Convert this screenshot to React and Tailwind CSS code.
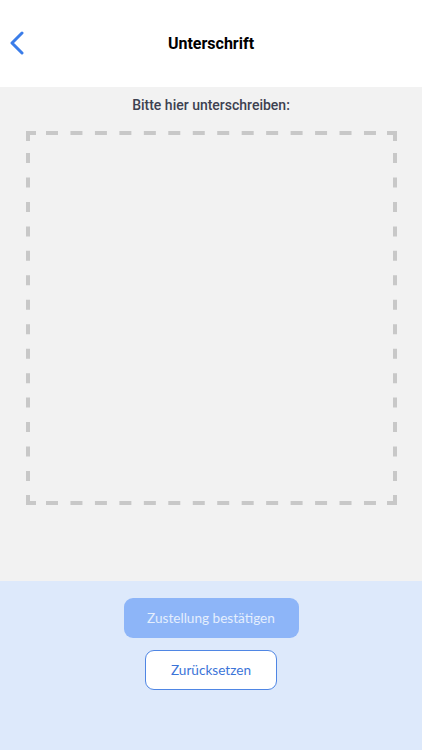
function DashedFrame() {
  // signature frame: solid L-shaped corners with evenly spaced dashes between them
  const c = "#c8c8c8";
  return (
    <svg className="absolute inset-0" width="371" height="374" viewBox="0 0 371 374" fill="none">
      <g stroke={c} strokeWidth="4">
        <path d="M2 10 V2 H10" />
        <path d="M361 2 H369 V10" />
        <path d="M2 364 V372 H10" />
        <path d="M361 372 H369 V364" />
        <line x1="20" y1="2" x2="350" y2="2" strokeDasharray="12 12.46" />
        <line x1="20" y1="372" x2="350" y2="372" strokeDasharray="12 12.46" />
        <line x1="2" y1="22" x2="2" y2="354" strokeDasharray="10 14.46" />
        <line x1="369" y1="22" x2="369" y2="354" strokeDasharray="10 14.46" />
      </g>
    </svg>
  );
}

export default function App() {
  return (
    <div className="flex h-[750px] w-[422px] flex-col bg-white" style={{ fontFamily: "Roboto, sans-serif" }}>
      {/* top navigation */}
      <header className="relative flex h-[87px] shrink-0 items-center justify-center bg-white">
        <button className="absolute left-[8px] top-[31px] flex h-[24px] w-[18px] items-center justify-center">
          <svg width="16" height="24" viewBox="0 0 16 24" fill="none">
            <path d="M13 2 L3 12 L13 22" stroke="#3b7de9" strokeWidth="3" strokeLinecap="round" strokeLinejoin="round" />
          </svg>
        </button>
        <h1 className="text-[16px] font-bold text-black">Unterschrift</h1>
      </header>

      {/* signature area */}
      <main className="flex h-[494px] shrink-0 flex-col items-center bg-[#f2f2f2] pt-[8px]">
        <p className="text-[14px] font-medium leading-[20px] text-[#3d4150]">Bitte hier unterschreiben:</p>
        <div className="relative mt-[16px] h-[374px] w-[371px]">
          <DashedFrame />
        </div>
      </main>

      {/* actions */}
      <footer className="flex flex-1 flex-col items-center bg-[#dde9fb] pt-[17px]" style={{ fontFamily: "Lato, sans-serif" }}>
        <button className="h-[40px] w-[175px] rounded-[9px] bg-[#8db5f8] text-[13.6px] text-[#e4eefd]">
          Zustellung bestätigen
        </button>
        <button className="mt-[12px] h-[40px] w-[132px] rounded-[9px] border border-[#4f86e4] bg-white text-[13.6px] text-[#3c74d8]">
          Zurücksetzen
        </button>
      </footer>
    </div>
  );
}
